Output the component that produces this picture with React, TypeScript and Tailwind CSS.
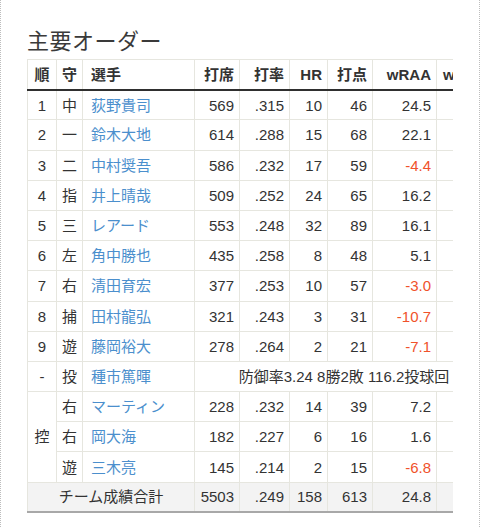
const font = { fontFamily: '"Liberation Sans", "Noto Sans CJK JP", sans-serif' };

type Row = {
  no: string;
  pos: string;
  name: string;
  pa: string;
  avg: string;
  hr: string;
  rbi: string;
  wraa: string;
};

const lineup: Row[] = [
  { no: "1", pos: "中", name: "荻野貴司", pa: "569", avg: ".315", hr: "10", rbi: "46", wraa: "24.5" },
  { no: "2", pos: "一", name: "鈴木大地", pa: "614", avg: ".288", hr: "15", rbi: "68", wraa: "22.1" },
  { no: "3", pos: "二", name: "中村奨吾", pa: "586", avg: ".232", hr: "17", rbi: "59", wraa: "-4.4" },
  { no: "4", pos: "指", name: "井上晴哉", pa: "509", avg: ".252", hr: "24", rbi: "65", wraa: "16.2" },
  { no: "5", pos: "三", name: "レアード", pa: "553", avg: ".248", hr: "32", rbi: "89", wraa: "16.1" },
  { no: "6", pos: "左", name: "角中勝也", pa: "435", avg: ".258", hr: "8", rbi: "48", wraa: "5.1" },
  { no: "7", pos: "右", name: "清田育宏", pa: "377", avg: ".253", hr: "10", rbi: "57", wraa: "-3.0" },
  { no: "8", pos: "捕", name: "田村龍弘", pa: "321", avg: ".243", hr: "3", rbi: "31", wraa: "-10.7" },
  { no: "9", pos: "遊", name: "藤岡裕大", pa: "278", avg: ".264", hr: "2", rbi: "21", wraa: "-7.1" },
];

const bench = [
  { pos: "右", name: "マーティン", pa: "228", avg: ".232", hr: "14", rbi: "39", wraa: "7.2" },
  { pos: "右", name: "岡大海", pa: "182", avg: ".227", hr: "6", rbi: "16", wraa: "1.6" },
  { pos: "遊", name: "三木亮", pa: "145", avg: ".214", hr: "2", rbi: "15", wraa: "-6.8" },
];

const td = "border border-[#e6e6df] px-[5px] h-[30.2px] p-0";
const num = td + " text-right";
const name = td + " text-left pl-[8px] text-[#4b8fcd]";

function Wraa({ v }: { v: string }) {
  return (
    <td className={num + (v.startsWith("-") ? " text-[#f0522b]" : "")}>{v}</td>
  );
}

function Stats({ r }: { r: { pa: string; avg: string; hr: string; rbi: string; wraa: string } }) {
  return (
    <>
      <td className={num}>{r.pa}</td>
      <td className={num}>{r.avg}</td>
      <td className={num}>{r.hr}</td>
      <td className={num}>{r.rbi}</td>
      <Wraa v={r.wraa} />
      <td className={num}></td>
    </>
  );
}

export default function App() {
  return (
    <div className="min-h-[527px] bg-white border-x border-dotted border-[#bdbdbd] pl-[26px] pt-[26px] text-[#333]" style={font}>
      <h2 className="text-[22px] leading-[32px] mb-[1px] tracking-[0.5px] text-[#3a3a3a]">主要オーダー</h2>

      <div className="w-[426px] overflow-hidden">
        <table className="table-fixed border-collapse w-[466px] text-[15px] leading-none">
          <colgroup>
            <col className="w-[29px]" />
            <col className="w-[26px]" />
            <col className="w-[112px]" />
            <col className="w-[45px]" />
            <col className="w-[50px]" />
            <col className="w-[38px]" />
            <col className="w-[45px]" />
            <col className="w-[64px]" />
            <col className="w-[57px]" />
          </colgroup>
          <thead>
            <tr className="border-t border-t-[#cfcfcf] border-b-2 border-b-[#2f2f2f]">
              <th className={td + " text-center"}>順</th>
              <th className={td + " text-center"}>守</th>
              <th className={td + " text-left pl-[8px]"}>選手</th>
              <th className={num}>打席</th>
              <th className={num}>打率</th>
              <th className={num}>HR</th>
              <th className={num}>打点</th>
              <th className={num}>wRAA</th>
              <th className={num}>wOBA</th>
            </tr>
          </thead>
          <tbody>
            {lineup.map((r) => (
              <tr key={r.no}>
                <td className={td + " text-center"}>{r.no}</td>
                <td className={td + " text-center"}>{r.pos}</td>
                <td className={name}>{r.name}</td>
                <Stats r={r} />
              </tr>
            ))}
            <tr>
              <td className={td + " text-center"}>-</td>
              <td className={td + " text-center"}>投</td>
              <td className={name}>種市篤暉</td>
              <td className={td + " text-center whitespace-nowrap"} colSpan={6}>
                防御率3.24 8勝2敗 116.2投球回
              </td>
            </tr>
            {bench.map((r, i) => (
              <tr key={r.name}>
                {i === 0 && (
                  <td className={td + " text-center"} rowSpan={3}>控</td>
                )}
                <td className={td + " text-center"}>{r.pos}</td>
                <td className={name}>{r.name}</td>
                <Stats r={r} />
              </tr>
            ))}
            <tr className="bg-[#f3f3f3] border-b-2 border-b-[#a8a8a8]">
              <td className={td + " text-center"} colSpan={3}>チーム成績合計</td>
              <td className={num}>5503</td>
              <td className={num}>.249</td>
              <td className={num}>158</td>
              <td className={num}>613</td>
              <td className={num}>24.8</td>
              <td className={num}></td>
            </tr>
          </tbody>
        </table>
      </div>
    </div>
  );
}
